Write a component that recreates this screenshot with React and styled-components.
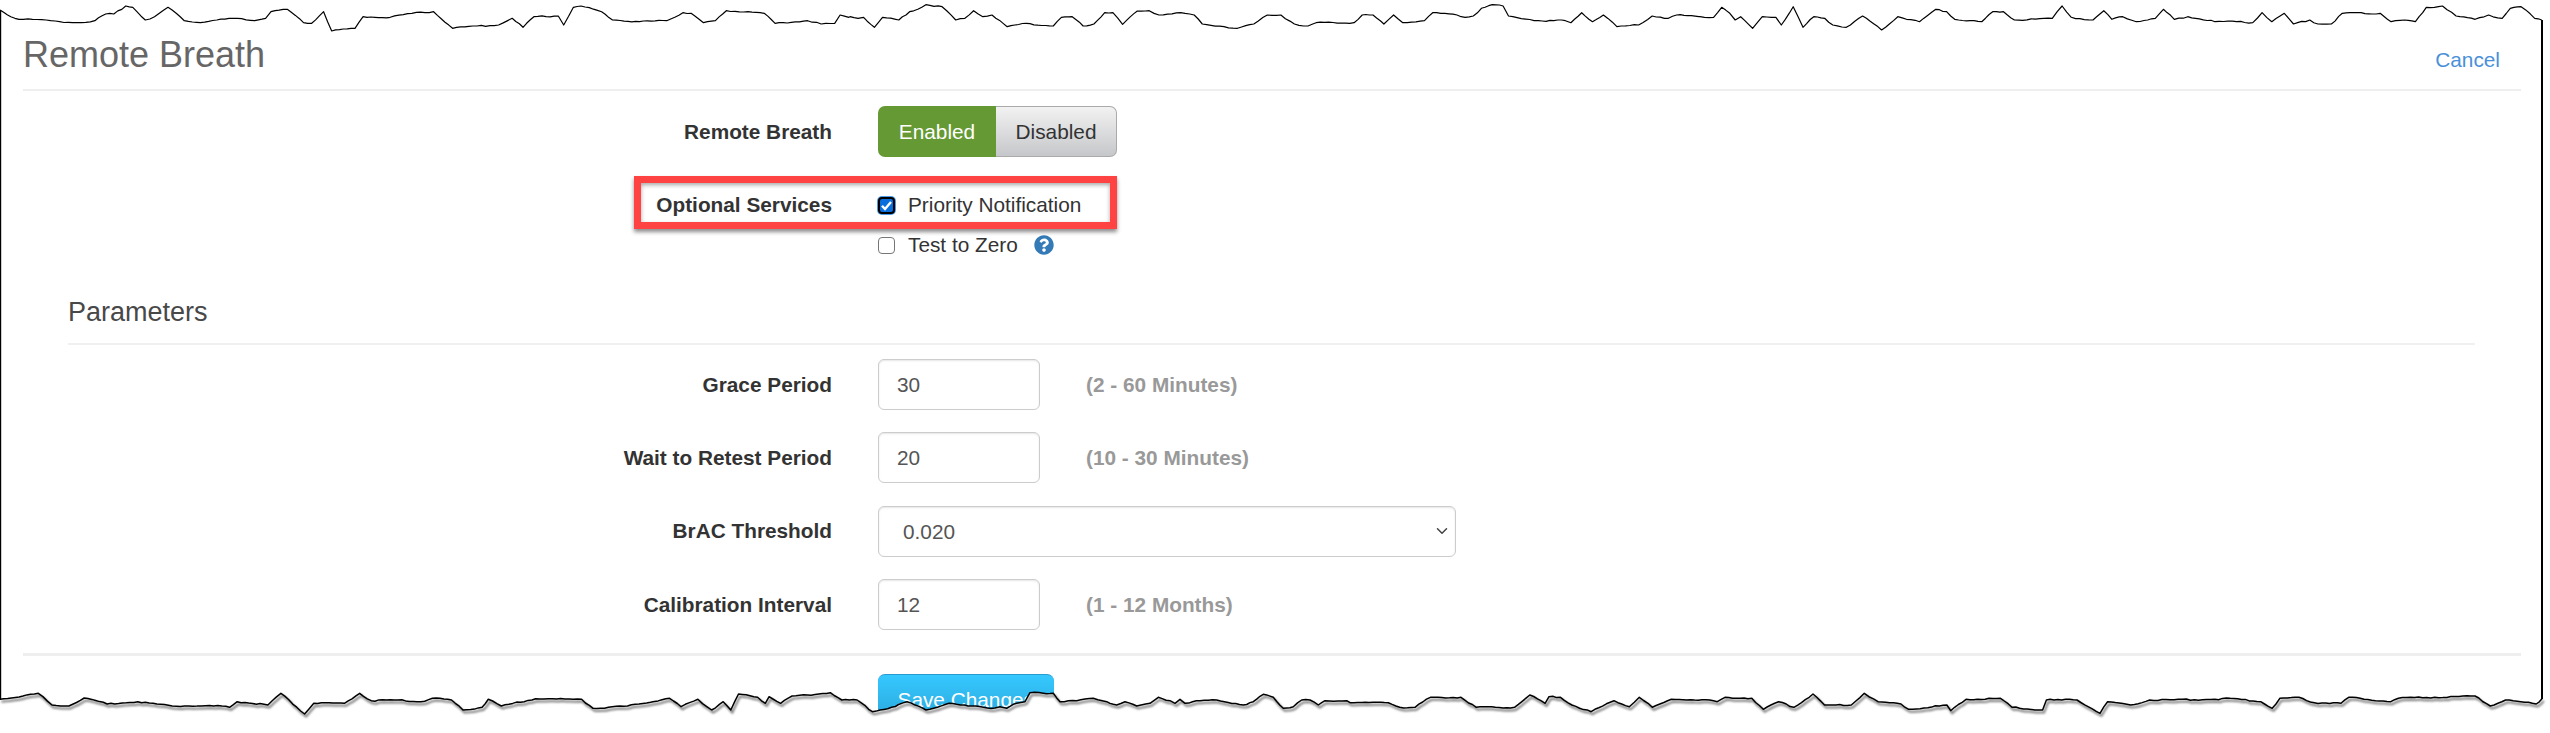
import React from "react";
import styled, { createGlobalStyle } from "styled-components";
import { FaQuestionCircle } from "react-icons/fa";
import { ChevronDown } from "lucide-react";

const Global = createGlobalStyle`
  html, body { margin: 0; padding: 0; background: #fff; }
  body { font-family: "Liberation Sans", Arial, sans-serif; color: #333; overflow: hidden; }
  * { box-sizing: border-box; }
`;

const conv = (pts, ox, oy, fx, fy) => pts.map(([x, y]) => [ox + x / fx, oy + y / fy]);

const topA = conv([[0,30],[20,50],[35,58],[60,58],[85,60],[110,65],[150,68],[175,62],[195,42],[210,42],[232,18],[245,22],[268,60],[285,50],[310,22],[325,40],[340,62],[370,68],[400,60],[430,55],[470,62],[490,55],[500,35],[530,28],[560,68],[575,70],[597,35],[612,93],[655,85],[670,50],[720,52],[760,40],[800,35],[835,85],[880,78],[920,75],[945,55],[965,82],[985,50],[1030,48],[1040,75],[1058,22],[1072,18],[1110,35],[1130,60],[1180,65],[1230,62],[1260,38],[1275,40],[1298,68],[1320,62],[1340,32],[1380,35],[1410,40],[1430,70],[1490,62],[1515,72],[1540,70],[1550,45],[1566,52]], 0, 0, 1.845, 3);
const topB = conv([[0,50],[15,55],[25,52],[45,82],[60,52],[90,60],[110,35],[125,28],[140,14],[170,20],[195,60],[212,55],[228,32],[245,50],[262,45],[290,80],[325,70],[375,78],[390,52],[410,50],[430,78],[450,72],[470,38],[485,38],[503,73],[530,33],[552,32],[570,45],[610,38],[635,45],[650,72],[690,80],[715,85],[745,72],[770,45],[795,45],[820,72],[845,78],[860,68],[930,68],[945,45],[965,45],[985,72],[1003,45],[1020,68],[1060,62],[1075,38],[1120,45],[1135,52],[1150,48],[1165,25],[1185,14],[1205,18],[1215,48],[1270,62],[1320,62],[1330,68],[1350,38],[1370,65],[1390,45],[1415,80],[1455,75],[1480,48],[1510,55],[1525,45],[1566,50]], 850, 0, 1.845, 3);
const topC = conv([[0,50],[25,52],[40,22],[55,40],[65,60],[75,50],[97,85],[115,50],[140,52],[150,75],[172,20],[190,82],[210,50],[230,55],[245,75],[270,82],[300,48],[335,90],[365,50],[405,65],[435,28],[455,35],[470,58],[520,65],[540,35],[560,35],[580,60],[650,55],[668,18],[685,52],[725,60],[745,32],[760,58],[780,50],[805,65],[840,55],[855,28],[875,58],[900,50],[950,65],[990,65],[1020,68],[1037,38],[1055,65],[1078,40],[1095,72],[1125,60],[1140,72],[1165,72],[1185,40],[1220,38],[1240,42],[1255,40],[1275,65],[1300,60],[1320,65],[1340,22],[1370,18],[1395,48],[1430,58],[1455,45],[1480,55],[1495,25],[1515,20],[1540,55],[1553,60]], 1700, 0, 1.845, 3);

const botA = conv([[0,238],[30,228],[50,220],[68,255],[90,258],[110,234],[140,252],[180,245],[225,258],[290,258],[300,262],[310,245],[350,255],[367,220],[398,282],[410,250],[450,250],[470,220],[485,242],[520,240],[550,245],[565,235],[590,240],[605,270],[630,262],[638,238],[655,258],[700,236],[760,238],[775,265],[820,258],[875,235],[890,260],[912,238],[930,270],[945,245],[955,270],[965,222],[990,232],[1000,250],[1005,230],[1020,250],[1035,228],[1055,225],[1085,218],[1100,240],[1120,240],[1140,275],[1165,262],[1185,245],[1210,270],[1240,250],[1265,258],[1300,264]], 0, 620, 1.3067, 3);
const botB = conv([[0,140],[20,145],[50,130],[75,125],[90,98],[130,100],[160,100],[180,125],[230,122],[280,115],[320,125],[350,135],[375,125],[410,138],[450,130],[475,112],[510,122],[525,130],[540,118],[555,130],[600,122],[650,120],[730,135],[760,125],[790,103],[820,112],[850,145],[880,140],[905,120],[930,120],[955,135],[975,122],[1040,122]], 1000, 660, 3, 3);
const botC = conv([[0,248],[50,248],[65,262],[85,262],[105,232],[145,232],[165,262],[215,262],[235,225],[255,250],[260,230],[275,232],[290,255],[315,275],[345,242],[365,260],[378,232],[395,262],[420,238],[470,240],[480,245],[490,232],[525,235],[540,268],[560,245],[580,262],[605,222],[620,255],[655,255],[672,220],[690,245],[720,252],[730,268],[780,255],[785,272],[805,238],[850,235],[865,262],[905,270],[910,240],[950,240],[980,280],[990,245],[1020,255],[1045,240],[1130,238],[1150,235],[1190,245],[1205,265],[1215,235],[1240,232],[1260,248],[1295,250],[1305,232],[1360,245],[1370,235],[1470,228],[1490,258],[1510,240],[1550,252],[1558,235]], 1350, 620, 1.3067, 3);

// Adds the small ragged wobble of a torn paper edge on top of the traced outline.
const rough = (pts) => {
  const out = [];
  let k = 0;
  for (let i = 0; i < pts.length - 1; i++) {
    const [x0, y0] = pts[i];
    const [x1, y1] = pts[i + 1];
    const n = Math.max(1, Math.round(Math.abs(x1 - x0) / 4));
    for (let j = 0; j < n; j++) {
      const t = j / n;
      k++;
      const w = j === 0 ? 0 : (Math.sin(k * 12.9898) * 43758.5453) % 1;
      out.push([x0 + (x1 - x0) * t, y0 + (y1 - y0) * t + w * 0.7]);
    }
  }
  out.push(pts[pts.length - 1]);
  return out;
};

const toD = (pts) => pts.map(([x, y], i) => `${i ? "L" : "M"}${x.toFixed(1)} ${y.toFixed(1)}`).join(" ");

const topEdge = rough([...topA, ...topB, ...topC]);
const botEdge = rough([...botA, ...botB, ...botC]);
const topD = toD(topEdge);
const botD = toD(botEdge);
const topMask = `M0 0 L${topD.slice(1)} L2550 0 Z`;
const botMask = `M0 733 L${botD.slice(1)} L2550 733 Z`;

const TornSvg = styled.svg`
  position: absolute;
  left: 0;
  top: 0;
  width: 2550px;
  height: 733px;
  pointer-events: none;
`;

const TornEdges = () => (
  <TornSvg viewBox="0 0 2550 733" aria-hidden="true">
    <defs>
      <filter id="tearShadow" x="-2%" y="-20%" width="104%" height="140%">
        <feGaussianBlur stdDeviation="1.2" />
      </filter>
    </defs>
    <path d={topMask} fill="#fff" />
    <path d={botMask} fill="#fff" />
    <path d={botD} fill="none" stroke="#777" strokeWidth="2" transform="translate(1.5 2.5)" filter="url(#tearShadow)" />
    <path d={botD} fill="none" stroke="#000" strokeWidth="1.5" strokeLinejoin="round" />
    <path d={topD} fill="none" stroke="#000" strokeWidth="1.2" strokeLinejoin="round" />
    <path d="M0.5 10 L0.5 700" fill="none" stroke="#000" strokeWidth="1.4" />
    <path d="M2542 20 L2542 699" fill="none" stroke="#000" strokeWidth="2" />
  </TornSvg>
);

const Page = styled.div`
  position: relative;
  width: 2550px;
  height: 733px;
  overflow: hidden;
  padding: 0 29px 0 23px;
`;

const Header = styled.header`
  height: 91px;
  display: flex;
  align-items: flex-start;
  justify-content: space-between;
  border-bottom: 2px solid #eee;
`;

const Title = styled.h1`
  margin: 35px 0 0 0;
  font-size: 36px;
  line-height: 40px;
  font-weight: 400;
  color: #666;
`;

const CancelLink = styled.a`
  margin: 48px 21px 0 0;
  font-size: 20.8px;
  line-height: 24px;
  color: #4a90d9;
`;

const Row = styled.div`
  display: flex;
  align-items: ${(p) => (p.$top ? "flex-start" : "center")};
  gap: 46px;
  margin-top: ${(p) => p.$mt}px;
  min-height: ${(p) => p.$h || 51}px;
`;

const Label = styled.label`
  width: 809px;
  flex: none;
  text-align: right;
  font-size: 20.8px;
  line-height: 24px;
  font-weight: 700;
  color: #333;
`;

const Toggle = styled.div`
  display: flex;
  width: 239px;
  height: 51px;
`;

const ToggleBtn = styled.button`
  flex: ${(p) => (p.$on ? "0 0 118px" : "1")};
  border: ${(p) => (p.$on ? "none" : "1px solid #aaa")};
  border-left: none;
  border-radius: ${(p) => (p.$on ? "7px 0 0 7px" : "0 7px 7px 0")};
  background: ${(p) => (p.$on ? "#659933" : "linear-gradient(#f2f2f2, #c6c7ca)")};
  color: ${(p) => (p.$on ? "#fff" : "#333")};
  font: 400 20.8px "Liberation Sans", Arial, sans-serif;
  padding: 0;
`;

const OptionGroup = styled.div`
  position: relative;
  margin-top: 36px;
`;

const Highlight = styled.div`
  position: absolute;
  left: 611px;
  top: -17px;
  width: 483px;
  height: 53px;
  border: 7px solid #ff4343;
  box-shadow: 0 3px 4px rgba(0, 0, 0, 0.45), inset 0 2px 4px rgba(0, 0, 0, 0.35);
  pointer-events: none;
`;

const CheckRow = styled.div`
  display: flex;
  align-items: center;
  height: 24px;
`;

const CheckStack = styled.div`
  display: flex;
  flex-direction: column;
  gap: 16px;
`;

const CheckBox = styled.span`
  width: 17px;
  height: 17px;
  flex: none;
  border-radius: 4px;
  display: flex;
  align-items: center;
  justify-content: center;
  background: ${(p) => (p.$on ? "#0a6fdc" : "#fff")};
  border: ${(p) => (p.$on ? "2.5px solid #000" : "1.5px solid #767676")};
  box-shadow: ${(p) => (p.$on ? "0 0 0 1px #4a9be8" : "none")};
`;

const CheckText = styled.span`
  margin-left: 13px;
  font-size: 20.8px;
  line-height: 24px;
  color: #333;
`;

const HelpIcon = styled(FaQuestionCircle)`
  margin-left: 16px;
  width: 20px;
  height: 20px;
  color: #337ab7;
`;

const Section = styled.section`
  margin: 39px 46px 0 45px;
  height: 49px;
  border-bottom: 2px solid #f0f0f0;
`;

const SectionTitle = styled.h2`
  margin: 0;
  font-size: 27px;
  line-height: 32px;
  font-weight: 400;
  color: #484848;
`;

const TextInput = styled.input`
  width: 162px;
  height: 51px;
  padding: 0 18px;
  border: 1.5px solid #ccc;
  border-radius: 6px;
  box-shadow: inset 0 1px 2px rgba(0, 0, 0, 0.1);
  font: 400 20.8px "Liberation Sans", Arial, sans-serif;
  color: #555;
  background: #fff;
`;

const Hint = styled.span`
  margin-left: 0;
  font-size: 20.8px;
  font-weight: 700;
  color: #999;
`;

const SelectWrap = styled.div`
  position: relative;
  width: 578px;
  height: 51px;
`;

const Select = styled.select`
  appearance: none;
  width: 100%;
  height: 100%;
  padding: 0 24px;
  border: 1.5px solid #ccc;
  border-radius: 6px;
  box-shadow: inset 0 1px 2px rgba(0, 0, 0, 0.1);
  font: 400 20.8px "Liberation Sans", Arial, sans-serif;
  color: #555;
  background: #fff;
`;

const SelectArrow = styled(ChevronDown)`
  position: absolute;
  right: 5px;
  top: 16px;
  width: 18px;
  height: 18px;
  color: #444;
  stroke-width: 2;
  pointer-events: none;
`;

const Divider = styled.hr`
  margin: 23px 0 0 0;
  border: none;
  height: 2.5px;
  background: #eee;
`;

const Footer = styled.div`
  margin: 18px 0 0 855px;
`;

const SaveButton = styled.button`
  width: 175.5px;
  height: 51px;
  padding: 0;
  border: none;
  border-top: 1.5px solid #2a9bd1;
  border-radius: 7px;
  background: linear-gradient(#35c8ff, #2aa5d8);
  color: #fff;
  font: 400 20.8px "Liberation Sans", Arial, sans-serif;
`;

const Tick = () => (
  <svg width="13" height="13" viewBox="0 0 13 13" aria-hidden="true">
    <path d="M2 6.8 L5 10 L11 3" fill="none" stroke="#fff" strokeWidth="2.4" />
  </svg>
);

const params = [
  { label: "Grace Period", value: "30", hint: "(2 - 60 Minutes)" },
  { label: "Wait to Retest Period", value: "20", hint: "(10 - 30 Minutes)" },
  { label: "BrAC Threshold", select: "0.020" },
  { label: "Calibration Interval", value: "12", hint: "(1 - 12 Months)" },
];

export default function App() {
  return (
    <>
      <Global />
      <Page>
        <Header>
          <Title>Remote Breath</Title>
          <CancelLink>Cancel</CancelLink>
        </Header>

        <Row $mt={15} $h={51}>
          <Label>Remote Breath</Label>
          <Toggle>
            <ToggleBtn $on>Enabled</ToggleBtn>
            <ToggleBtn>Disabled</ToggleBtn>
          </Toggle>
        </Row>

        <OptionGroup>
          <Row $mt={0} $h={24} $top>
            <Label>Optional Services</Label>
            <CheckStack>
              <CheckRow>
                <CheckBox $on>
                  <Tick />
                </CheckBox>
                <CheckText>Priority Notification</CheckText>
              </CheckRow>
              <CheckRow>
                <CheckBox />
                <CheckText>Test to Zero</CheckText>
                <HelpIcon />
              </CheckRow>
            </CheckStack>
          </Row>
          <Highlight />
        </OptionGroup>

        <Section>
          <SectionTitle>Parameters</SectionTitle>
        </Section>

        {params.map((p, i) => (
          <Row key={p.label} $mt={i === 0 ? 14 : 22.4}>
            <Label>{p.label}</Label>
            {p.select ? (
              <SelectWrap>
                <Select defaultValue={p.select}>
                  <option>{p.select}</option>
                </Select>
                <SelectArrow />
              </SelectWrap>
            ) : (
              <>
                <TextInput defaultValue={p.value} />
                <Hint>{p.hint}</Hint>
              </>
            )}
          </Row>
        ))}

        <Divider />
        <Footer>
          <SaveButton>Save Changes</SaveButton>
        </Footer>

        <TornEdges />
      </Page>
    </>
  );
}
